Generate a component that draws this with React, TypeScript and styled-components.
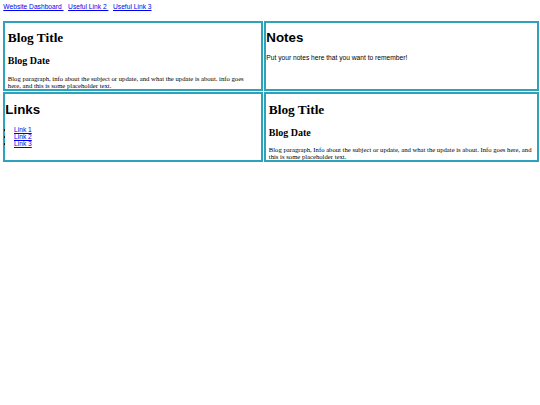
import React from "react";
import styled, { createGlobalStyle } from "styled-components";

const GlobalStyle = createGlobalStyle`
  html, body {
    margin: 0;
    padding: 0;
    background: #ffffff;
  }
  body {
    font-family: "Liberation Sans", Arial, sans-serif;
    font-size: 6.67px;
    line-height: normal;
    color: #000000;
  }
`;

const Page = styled.div`
  padding: 3.33px 0 0 3.33px;
`;

const Nav = styled.nav`
  display: flex;
  height: 7.67px;
  margin-bottom: 10px;
`;

const NavLink = styled.a`
  color: #0000ee;
  text-decoration: underline;
  margin-right: 4.6px;
  white-space: nowrap;
`;

const Grid = styled.div`
  display: grid;
  grid-template-columns: 259.5px 275px;
  grid-template-rows: 70px 70px;
  gap: 1.5px;
`;

const Card = styled.section<{ $blog?: boolean }>`
  box-sizing: border-box;
  border: 2px solid #2ca3ba;
  overflow: ${(p) => (p.$blog ? "hidden" : "visible")};
  padding: ${(p) => (p.$blog ? "0 2.5px" : "0")};
  font-family: ${(p) =>
    p.$blog
      ? `"Liberation Serif", "Times New Roman", serif`
      : `"Liberation Sans", Arial, sans-serif`};
`;

const Title = styled.h1`
  font-size: 13.33px;
  font-weight: bold;
  margin: 7.5px 0 8.9px;
`;

const DateHeading = styled.h2`
  font-size: 10px;
  font-weight: bold;
  margin: 8.3px 0;
`;

const Paragraph = styled.p`
  margin: 6.67px 0;
`;

const LinkList = styled.ul`
  margin: 6.67px 0;
  padding-left: 8.7px;
  list-style: none;
`;

const LinkItem = styled.li`
  position: relative;

  &::before {
    content: "";
    position: absolute;
    left: -10.4px;
    top: 3px;
    width: 1.8px;
    height: 1.8px;
    border-radius: 50%;
    background: #000000;
  }

  a {
    color: #0000ee;
    text-decoration: underline;
  }
`;

const navLinks = ["Website Dashboard", "Useful Link 2", "Useful Link 3"];

function BlogCard({ text }: { text: string }) {
  return (
    <Card $blog>
      <Title>Blog Title</Title>
      <DateHeading>Blog Date</DateHeading>
      <Paragraph>{text}</Paragraph>
    </Card>
  );
}

export default function App() {
  return (
    <>
      <GlobalStyle />
      <Page>
        <Nav>
          {navLinks.map((label, i) => (
            <NavLink href="#" key={label}>
              {i < navLinks.length - 1 ? `${label}\u00a0` : label}
            </NavLink>
          ))}
        </Nav>
        <Grid>
          <BlogCard text="Blog paragraph, info about the subject or update, and what the update is about. info goes here, and this is some placeholder text." />
          <Card>
            <Title>Notes</Title>
            <Paragraph>Put your notes here that you want to remember!</Paragraph>
          </Card>
          <Card>
            <Title>Links</Title>
            <LinkList>
              {["Link 1", "Link 2", "Link 3"].map((label) => (
                <LinkItem key={label}>
                  <a href="#">{label}</a>
                </LinkItem>
              ))}
            </LinkList>
          </Card>
          <BlogCard text="Blog paragraph, Info about the subject or update, and what the update is about. Info goes here, and this is some placeholder text." />
        </Grid>
      </Page>
    </>
  );
}
